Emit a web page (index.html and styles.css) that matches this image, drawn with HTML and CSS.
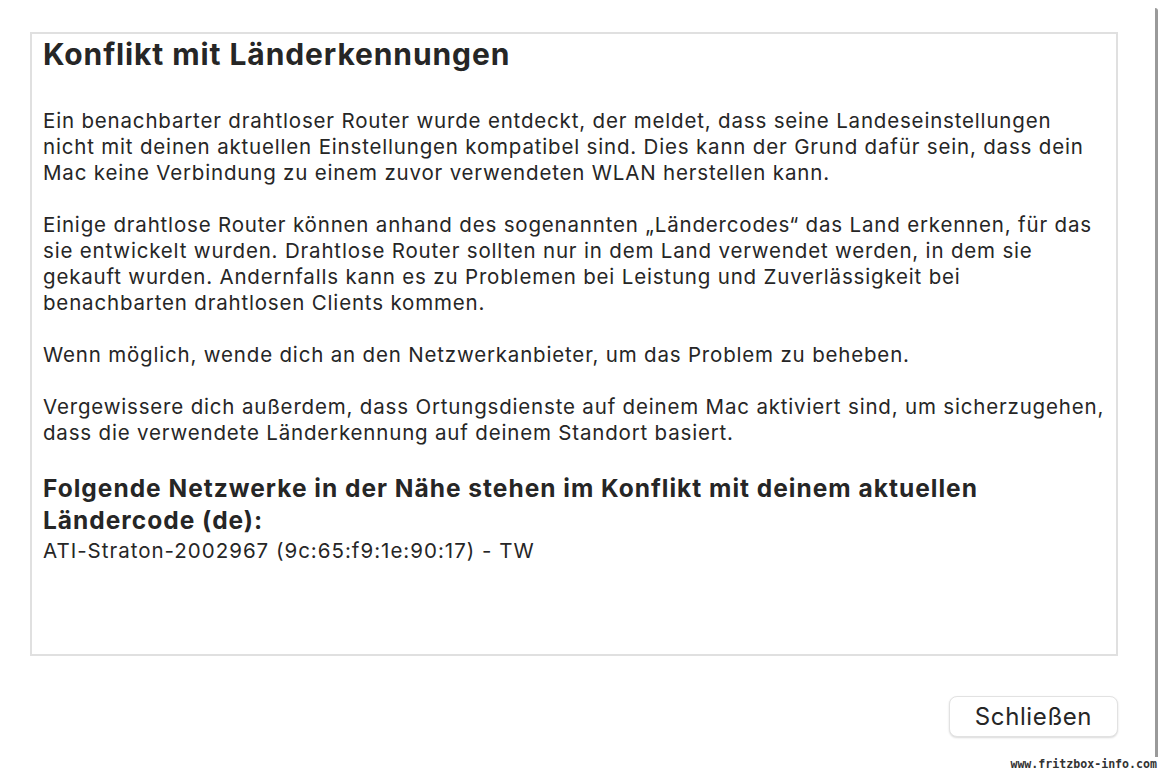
FILE: index.html
```html
<!DOCTYPE html>
<html lang="de">
  <head>
    <meta charset="UTF-8" />
    <title>Konflikt mit Länderkennungen</title>
    <link rel="stylesheet" href="styles.css">
  </head>
  <body>
    <div class="window">
      <main class="content">
        <section class="report">
          <h1>Konflikt mit Länderkennungen</h1>
          <p>
            Ein benachbarter drahtloser Router wurde entdeckt, der meldet, dass seine Landeseinstellungen<br>
            nicht mit deinen aktuellen Einstellungen kompatibel sind. Dies kann der Grund dafür sein, dass dein<br>
            Mac keine Verbindung zu einem zuvor verwendeten WLAN herstellen kann.
          </p>
          <p>
            Einige drahtlose Router können anhand des sogenannten „Ländercodes“ das Land erkennen, für das<br>
            sie entwickelt wurden. Drahtlose Router sollten nur in dem Land verwendet werden, in dem sie<br>
            gekauft wurden. Andernfalls kann es zu Problemen bei Leistung und Zuverlässigkeit bei<br>
            benachbarten drahtlosen Clients kommen.
          </p>
          <p>Wenn möglich, wende dich an den Netzwerkanbieter, um das Problem zu beheben.</p>
          <p>
            Vergewissere dich außerdem, dass Ortungsdienste auf deinem Mac aktiviert sind, um sicherzugehen,<br>
            dass die verwendete Länderkennung auf deinem Standort basiert.
          </p>
          <h2>Folgende Netzwerke in der Nähe stehen im Konflikt mit deinem aktuellen<br>Ländercode (de):</h2>
          <div class="network">ATI-Straton-2002967 (9c:65:f9:1e:90:17) - TW</div>
        </section>
        <div class="actions">
          <button type="button">Schließen</button>
        </div>
      </main>
      <div class="edge"></div>
    </div>
    <div class="watermark">www.fritzbox-info.com</div>
  </body>
</html>
```

FILE: styles.css
```css
:root {
  --text: #262626;
  --border: #e0e0e0;
  --edge: #9a9a9a;
}

* {
  margin: 0;
  padding: 0;
  box-sizing: border-box;
}

html,
body {
  height: 100%;
}

body {
  font-family: "Inter", "Liberation Sans", sans-serif;
  color: var(--text);
  background-color: #ffffff;
  position: relative;
  overflow: hidden;
}

.window {
  display: flex;
  height: 757px;
}

.content {
  flex: 1;
  min-width: 0;
  padding: 32px 37px 0 30px;
}

.report {
  height: 624px;
  border: 2px solid var(--border);
  padding: 2px 11px 0 11px;
  white-space: nowrap;
  overflow: hidden;
}

h1 {
  font-size: 30px;
  font-weight: 700;
  line-height: 36px;
  letter-spacing: 0.9px;
  margin-bottom: 36px;
}

p {
  font-size: 20.5px;
  line-height: 26px;
  letter-spacing: 0.82px;
  margin-bottom: 26px;
}

h2 {
  font-size: 24.5px;
  font-weight: 700;
  line-height: 32px;
  letter-spacing: 1px;
}

.network {
  font-size: 20.5px;
  line-height: 30px;
  letter-spacing: 1px;
}

.actions {
  display: flex;
  justify-content: flex-end;
  padding: 40px 0 0 0;
}

button {
  font-family: inherit;
  font-size: 24px;
  letter-spacing: 0.6px;
  color: var(--text);
  background-color: #ffffff;
  border: 1px solid #e2e2e2;
  border-radius: 8px;
  width: 169px;
  height: 41px;
  box-shadow: 0 1px 2px rgba(0, 0, 0, 0.15);
}

.edge {
  width: 3px;
  margin-right: 2px;
  margin-top: 8px;
  background-color: var(--edge);
  border-top-right-radius: 6px;
}

.watermark {
  position: absolute;
  right: 3px;
  bottom: 1px;
  font-family: "DejaVu Sans Mono", monospace;
  font-weight: 700;
  font-size: 11.6px;
  color: #333;
}
```
